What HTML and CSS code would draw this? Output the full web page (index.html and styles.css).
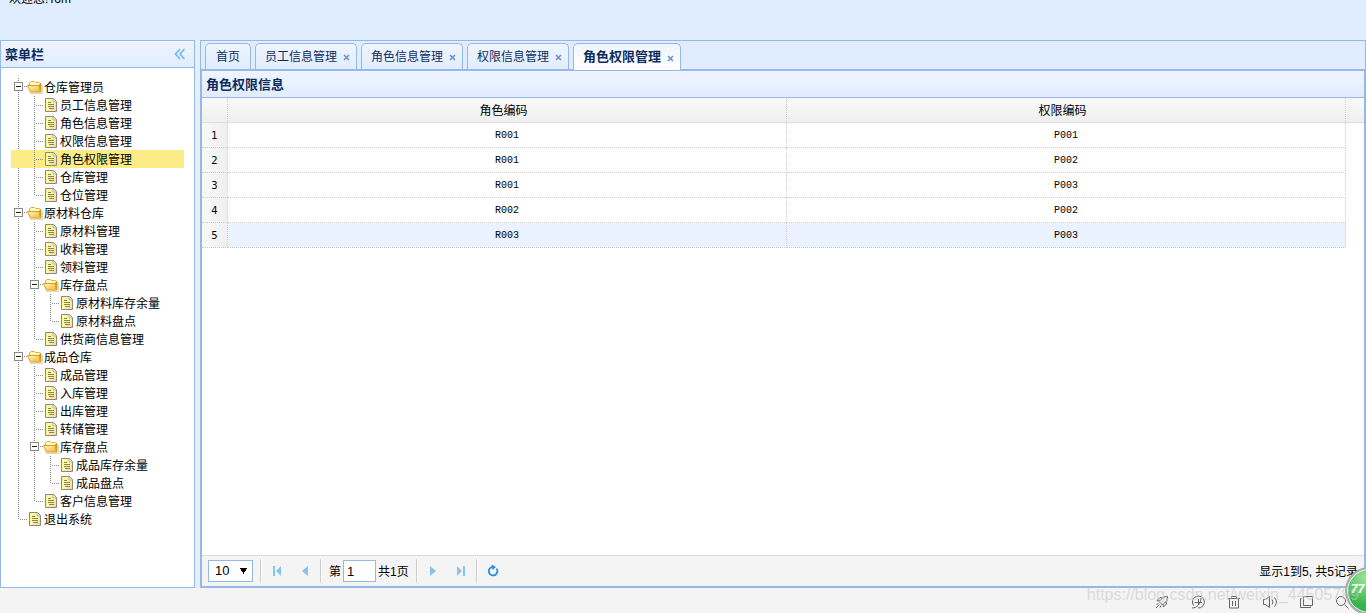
FILE: index.html
```html
<!DOCTYPE html>
<html lang="zh-CN">
<head>
<meta charset="utf-8">
<title>仓库管理系统</title>
<link rel="stylesheet" href="styles.css">
</head>
<body>
<svg class="defs" aria-hidden="true">
  <defs>
    <linearGradient id="gold" x1="0" y1="0" x2="1" y2="1"><stop offset="0" stop-color="#fffbc0"/><stop offset="1" stop-color="#f0b429"/></linearGradient>
    <linearGradient id="leaf" x1="0" y1="0" x2="1" y2="1"><stop offset=".5" stop-color="#fffa99"/><stop offset="1" stop-color="#f8cba0"/></linearGradient>
  </defs>
  <symbol id="folder" viewBox="0 0 16 18">
    <path d="M2.500 8V5l1.500-1.500h3.500l1 1h4l1 1V8" fill="#fff9c8" stroke="#e0b030"/>
    <path d="M3 15.500h12.500V7" stroke="#d6d3c8" fill="none"/>
    <path d="M12 7l2-1.500v8.500h-1.500z" fill="#d89a20" stroke="#b8860b" stroke-width=".6"/>
    <path d="M.5 7.500h11.500l1.500 6.500H3.500z" fill="url(#gold)" stroke="#d8a01c"/>
  </symbol>
  <symbol id="file" viewBox="0 0 16 18">
    <path d="M2.500 2.500h8l3 3v10h-11z" fill="url(#leaf)" stroke="#888"/>
    <path d="M10 3v3h3" fill="#fff" stroke="#aaa"/>
    <path d="M5 6.500h3M5 8.500h6M5 10.500h6M6 12.500h5" stroke="#86865e" fill="none"/>
  </symbol>
  <symbol id="cross" viewBox="0 0 7 7"><path d="M1 1l5 5M6 1L1 6" stroke="#6a8fc6" stroke-width="1.500" fill="none"/></symbol>
</svg>

<header class="banner"><span class="welcome">欢迎您!Tom</span></header>

<main class="layout">
  <aside class="west">
    <div class="panel-head">
      <h2>菜单栏</h2>
      <button class="collapse" type="button" aria-label="折叠"><svg viewBox="0 0 12 12"><path d="M6 1L1.500 6 6 11M10.500 1L6 6l4.500 5" fill="none" stroke="#6cb8ea" stroke-width="1.600"/></svg></button>
    </div>
    <nav class="menu">
      <ul class="tree">
        <li><div class="node"><button class="hit" type="button" aria-label="折叠"></button><svg class="icon"><use href="#folder"/></svg><span>仓库管理员</span></div>
          <ul>
            <li><a class="node" href="#"><i class="join"></i><svg class="icon"><use href="#file"/></svg><span>员工信息管理</span></a></li>
            <li><a class="node" href="#"><i class="join"></i><svg class="icon"><use href="#file"/></svg><span>角色信息管理</span></a></li>
            <li><a class="node" href="#"><i class="join"></i><svg class="icon"><use href="#file"/></svg><span>权限信息管理</span></a></li>
            <li><a class="node selected" href="#"><i class="join"></i><svg class="icon"><use href="#file"/></svg><span>角色权限管理</span></a></li>
            <li><a class="node" href="#"><i class="join"></i><svg class="icon"><use href="#file"/></svg><span>仓库管理</span></a></li>
            <li><a class="node" href="#"><i class="join"></i><svg class="icon"><use href="#file"/></svg><span>仓位管理</span></a></li>
          </ul>
        </li>
        <li><div class="node"><button class="hit" type="button" aria-label="折叠"></button><svg class="icon"><use href="#folder"/></svg><span>原材料仓库</span></div>
          <ul>
            <li><a class="node" href="#"><i class="join"></i><svg class="icon"><use href="#file"/></svg><span>原材料管理</span></a></li>
            <li><a class="node" href="#"><i class="join"></i><svg class="icon"><use href="#file"/></svg><span>收料管理</span></a></li>
            <li><a class="node" href="#"><i class="join"></i><svg class="icon"><use href="#file"/></svg><span>领料管理</span></a></li>
            <li><div class="node"><button class="hit" type="button" aria-label="折叠"></button><svg class="icon"><use href="#folder"/></svg><span>库存盘点</span></div>
              <ul>
                <li><a class="node" href="#"><i class="join"></i><svg class="icon"><use href="#file"/></svg><span>原材料库存余量</span></a></li>
                <li><a class="node" href="#"><i class="join"></i><svg class="icon"><use href="#file"/></svg><span>原材料盘点</span></a></li>
              </ul>
            </li>
            <li><a class="node" href="#"><i class="join"></i><svg class="icon"><use href="#file"/></svg><span>供货商信息管理</span></a></li>
          </ul>
        </li>
        <li><div class="node"><button class="hit" type="button" aria-label="折叠"></button><svg class="icon"><use href="#folder"/></svg><span>成品仓库</span></div>
          <ul>
            <li><a class="node" href="#"><i class="join"></i><svg class="icon"><use href="#file"/></svg><span>成品管理</span></a></li>
            <li><a class="node" href="#"><i class="join"></i><svg class="icon"><use href="#file"/></svg><span>入库管理</span></a></li>
            <li><a class="node" href="#"><i class="join"></i><svg class="icon"><use href="#file"/></svg><span>出库管理</span></a></li>
            <li><a class="node" href="#"><i class="join"></i><svg class="icon"><use href="#file"/></svg><span>转储管理</span></a></li>
            <li><div class="node"><button class="hit" type="button" aria-label="折叠"></button><svg class="icon"><use href="#folder"/></svg><span>库存盘点</span></div>
              <ul>
                <li><a class="node" href="#"><i class="join"></i><svg class="icon"><use href="#file"/></svg><span>成品库存余量</span></a></li>
                <li><a class="node" href="#"><i class="join"></i><svg class="icon"><use href="#file"/></svg><span>成品盘点</span></a></li>
              </ul>
            </li>
            <li><a class="node" href="#"><i class="join"></i><svg class="icon"><use href="#file"/></svg><span>客户信息管理</span></a></li>
          </ul>
        </li>
        <li><a class="node" href="#"><i class="join"></i><svg class="icon"><use href="#file"/></svg><span>退出系统</span></a></li>
      </ul>
    </nav>
  </aside>

  <section class="center">
    <div class="tabs">
      <div class="tab"><button class="tab-title" type="button">首页</button></div>
      <div class="tab"><button class="tab-title" type="button">员工信息管理</button><button class="close" type="button" aria-label="关闭"><svg><use href="#cross"/></svg></button></div>
      <div class="tab"><button class="tab-title" type="button">角色信息管理</button><button class="close" type="button" aria-label="关闭"><svg><use href="#cross"/></svg></button></div>
      <div class="tab"><button class="tab-title" type="button">权限信息管理</button><button class="close" type="button" aria-label="关闭"><svg><use href="#cross"/></svg></button></div>
      <div class="tab active"><button class="tab-title" type="button">角色权限管理</button><button class="close" type="button" aria-label="关闭"><svg><use href="#cross"/></svg></button></div>
    </div>
    <div class="grid-panel">
      <div class="panel-head"><h2>角色权限信息</h2></div>
      <div class="grid-body">
        <table class="grid">
          <colgroup><col class="c-num"><col><col><col class="c-scroll"></colgroup>
          <thead><tr><th></th><th>角色编码</th><th>权限编码</th><th class="blank"></th></tr></thead>
          <tbody>
            <tr><td class="num">1</td><td>R001</td><td>P001</td><td class="blank"></td></tr>
            <tr><td class="num">2</td><td>R001</td><td>P002</td><td class="blank"></td></tr>
            <tr><td class="num">3</td><td>R001</td><td>P003</td><td class="blank"></td></tr>
            <tr><td class="num">4</td><td>R002</td><td>P002</td><td class="blank"></td></tr>
            <tr class="over"><td class="num">5</td><td>R003</td><td>P003</td><td class="blank"></td></tr>
          </tbody>
        </table>
      </div>
      <div class="pager">
        <select class="page-size" aria-label="每页条数"><option>10</option></select>
        <i class="sep"></i>
        <button class="pbtn" type="button" aria-label="首页"><svg viewBox="0 0 16 16"><path d="M4 3h2v10H4zM12 3v10L7 8z" fill="#84c4ee"/></svg></button>
        <button class="pbtn" type="button" aria-label="上一页"><svg viewBox="0 0 16 16"><path d="M11 3v10L5 8z" fill="#84c4ee"/></svg></button>
        <i class="sep"></i>
        <label for="page">第</label>
        <input class="page" id="page" type="text" value="1">
        <span class="total">共1页</span>
        <i class="sep"></i>
        <button class="pbtn" type="button" aria-label="下一页"><svg viewBox="0 0 16 16"><path d="M5 3v10l6-5z" fill="#84c4ee"/></svg></button>
        <button class="pbtn" type="button" aria-label="末页"><svg viewBox="0 0 16 16"><path d="M4 3v10l5-5zM10 3h2v10h-2z" fill="#84c4ee"/></svg></button>
        <i class="sep"></i>
        <button class="pbtn" type="button" aria-label="刷新"><svg viewBox="0 0 16 16"><path d="M11.500 5.500a4.300 4.300 0 1 1-4.500-1.500" fill="none" stroke="#2b8fd8" stroke-width="1.800"/><path d="M6.500 1.500l4.500 2.500-3.500 3z" fill="#2b8fd8"/></svg></button>
        <span class="info">显示1到5, 共5记录</span>
      </div>
    </div>
  </section>
</main>

<footer class="status">
  <svg viewBox="0 0 16 16"><path d="M13.500 2.500l-4 .5-4.500 4.500 3.500 3.500 4.500-4.500zM5.500 7L3 6.500l3-3 2.500.5M9 10.500l.5 2.500 3-3-.5-2.500M2 14l3.500-3.500M2.500 10.500l2-1M6 13.500l1-2"/></svg>
  <svg viewBox="0 0 16 16"><path d="M3.500 11.500A6 6 0 1 1 8 14M2 14c5 0 8.500-4 9-10M4.500 8.500H12M8.500 5v6"/></svg>
  <svg viewBox="0 0 16 16"><path d="M2 4.500h12M5.500 4V2.500h5V4M3.500 5v9h9V5M6.500 7v5M9.500 7v5"/></svg>
  <svg viewBox="0 0 16 16"><path d="M1.500 5.500h2l4-3v11l-4-3h-2zM10 5.500q2 2.500 0 5M12.500 3.500q4 4.500 0 9"/></svg>
  <svg viewBox="0 0 16 16"><path d="M5.500 2.500h9v9h-9zM3.500 4.500h-1v9h10v-1"/></svg>
  <svg viewBox="0 0 16 16"><circle cx="7" cy="7" r="4.500"/><path d="M10.500 10.500l4 4"/></svg>
</footer>
<div class="ball">77</div>
<div class="watermark">https://blog.csdn.net/weixin_44505789</div>
</body>
</html>
```
FILE: styles.css
```css
* { box-sizing: border-box; }
body {
  margin: 0;
  height: 100vh;
  display: flex;
  flex-direction: column;
  overflow: hidden;
  position: relative;
  background: #e6eef8;
  color: #000;
  font: 12px/18px "Liberation Sans", "Noto Sans CJK SC", sans-serif;
}
button { border: 0; padding: 0; background: none; font: inherit; color: inherit; }
svg { display: block; }
.defs { position: absolute; width: 0; height: 0; }

.banner { flex: none; height: 40px; padding-left: 9px; background: #e0ecff; overflow: hidden; }
.welcome { display: block; margin-top: -10px; line-height: 18px; }

.layout { flex: 1; min-height: 0; display: flex; gap: 5px; }
.west {
  flex: none;
  width: 195px;
  display: flex;
  flex-direction: column;
  border: 1px solid #95b8e7;
  background: #fff;
}
.panel-head {
  flex: none;
  height: 27px;
  padding: 0 8px 0 4px;
  display: flex;
  align-items: center;
  justify-content: space-between;
  border-bottom: 1px solid #95b8e7;
  background: linear-gradient(#eff5ff, #e0ecff);
}
.panel-head h2 { margin: 0; padding-top: 1px; font-size: 13px; line-height: 18px; color: #0e2d5f; }
.collapse svg { width: 12px; height: 12px; }

.menu { padding: 10px; }
.tree, .tree ul { margin: 0; padding: 0; list-style: none; }
.tree ul { padding-left: 16px; }
.tree li { position: relative; }
.tree li::before {
  content: "";
  position: absolute;
  left: 7px;
  top: 0;
  width: 1px;
  height: 100%;
  background: repeating-linear-gradient(#888 0 1px, transparent 1px 2px);
}
.tree li:last-child::before { height: 10px; }
.node { display: flex; height: 18px; color: #000; text-decoration: none; white-space: nowrap; }
.node span { padding: 1px 0 0 1px; }
.selected { margin-left: -16px; padding-left: 16px; background: #fbec88; }
.icon { flex: none; width: 16px; height: 18px; }
.join, .hit { flex: none; width: 16px; height: 18px; }
.join { background: repeating-linear-gradient(90deg, #888 0 1px, transparent 1px 2px) 9px 9px / 7px 1px no-repeat; }
.hit {
  position: relative;
  background:
    linear-gradient(#222, #222) 5px 8px / 5px 1px no-repeat,
    linear-gradient(#fff, #fff) 4px 5px / 7px 7px no-repeat,
    linear-gradient(#888, #888) 3px 4px / 9px 9px no-repeat,
    repeating-linear-gradient(90deg, #888 0 1px, transparent 1px 2px) 13px 8px / 3px 1px no-repeat;
}

.center { flex: 1; min-width: 0; display: flex; flex-direction: column; }
.tabs {
  flex: none;
  height: 30px;
  padding: 2px 4px 0;
  display: flex;
  gap: 4px;
  border: 1px solid #95b8e7;
  background: #e0ecff;
}
.tab {
  height: 26px;
  padding: 0 10px;
  display: flex;
  align-items: center;
  border: 1px solid #95b8e7;
  border-radius: 5px 5px 0 0;
  border-bottom: 0;
  background: linear-gradient(#eff5ff, #e0ecff);
  color: #0e2d5f;
}
.tab:has(.close) { padding: 0 6px 0 9px; }
.tab.active { height: 27px; background: linear-gradient(#eff5ff, #fff); font-size: 13px; font-weight: bold; position: relative; }
.tab-title { white-space: nowrap; }
.close { margin-left: 6px; margin-top: 2px; }
.close svg { width: 7px; height: 7px; }

.grid-panel {
  flex: 1;
  min-height: 0;
  display: flex;
  flex-direction: column;
  border: 2px solid #95b8e7;
  border-top-width: 1px;
}
.grid-body { flex: 1; min-height: 0; background: #fff; }
.grid { width: 100%; table-layout: fixed; border-collapse: separate; border-spacing: 0; }
.c-num { width: 26px; }
.c-scroll { width: 18px; }
.grid th, .grid td {
  height: 25px;
  padding: 2px 0 0;
  border: 0 dotted #ccc;
  border-width: 0 1px 1px 0;
  text-align: center;
  line-height: 18px;
  font-weight: normal;
}
.grid thead tr { background: linear-gradient(#f9f9f9, #efefef); }
.grid th { padding-right: 7px; border-bottom: 1px solid #ddd; }
.grid th.blank { border-right: 0; }
.grid td { font-family: "Liberation Mono", monospace; font-size: 10px; }
.grid td.blank { border: 0; background: #fff; }
.grid td.num { background: linear-gradient(90deg, #f9f9f9, #efefef); font-family: "DejaVu Sans", sans-serif; }
.over { background: #eaf2ff; }

.pager {
  flex: none;
  height: 31px;
  padding: 0 6px;
  display: flex;
  align-items: center;
  border-top: 1px solid #ddd;
  background: #f4f4f4;
}
.page-size {
  appearance: none;
  width: 45px;
  height: 22px;
  padding: 0 6px;
  border: 1px solid #95b8e7;
  border-radius: 0;
  background: conic-gradient(from -32deg at 50% 100%, #000 64deg, transparent 0) 31px 7px / 7px 6px no-repeat #fff;
  color: #000;
  font: 13px/20px "Liberation Sans", sans-serif;
}
.sep { flex: none; width: 2px; height: 24px; margin: 0 7px; border-left: 1px solid #ccc; border-right: 1px solid #fff; }
.pbtn { flex: none; width: 16px; }
.pbtn + .pbtn { margin-left: 12px; }
.pbtn svg { width: 16px; height: 16px; }
.page {
  width: 33px;
  height: 22px;
  margin: 0 2px;
  padding: 0 3px;
  border: 1px solid #95b8e7;
  background: #fff;
  color: #000;
  font: 13px/20px "Liberation Sans", sans-serif;
}
.pager label, .total, .info { padding-top: 1px; }
.info { margin-left: auto; white-space: nowrap; }

.status {
  flex: none;
  height: 25px;
  padding: 6px 16px 0;
  display: flex;
  justify-content: flex-end;
  gap: 20px;
  background: #f4f4f4;
}
.status svg { width: 16px; height: 16px; fill: none; stroke: #666; }
.watermark {
  position: absolute;
  right: 7px;
  bottom: 9px;
  color: rgba(200, 200, 200, .6);
  font: 16px/18px "Liberation Sans", sans-serif;
}
.ball {
  position: absolute;
  right: -27px;
  bottom: -2px;
  width: 48px;
  height: 48px;
  padding-left: 4px;
  border: 2px solid #aaa;
  border-radius: 50%;
  background: radial-gradient(circle at 40% 20%, #9be39b, #38b54a 60%);
  box-shadow: inset 0 0 0 1px #fff;
  color: #fff;
  font: italic bold 12px/40px "Liberation Sans", sans-serif;
}
```
